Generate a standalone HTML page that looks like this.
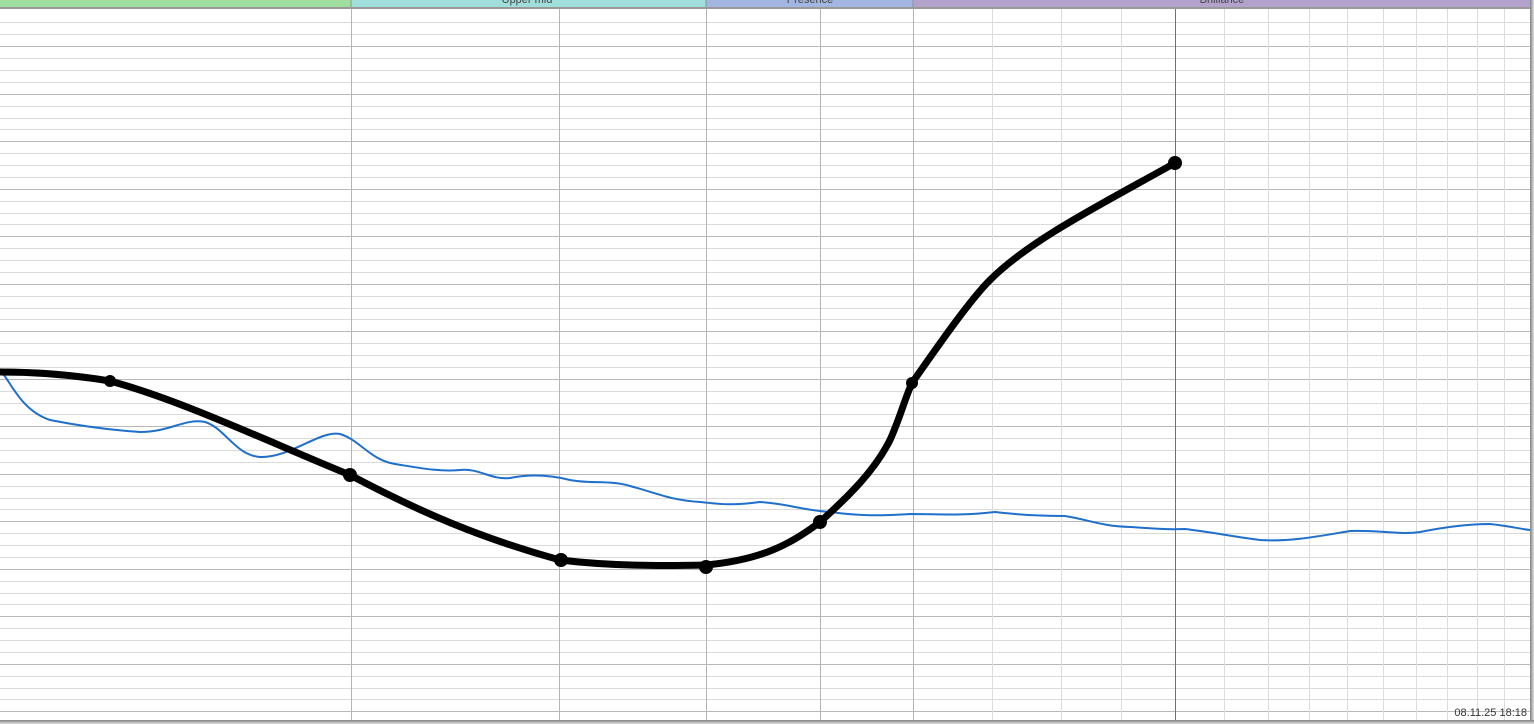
<!DOCTYPE html>
<html><head><style>
html,body{margin:0;padding:0;background:#fff;width:1534px;height:724px;overflow:hidden}
svg{display:block}
text{font-family:"Liberation Sans",sans-serif}
</style></head><body>
<svg width="1534" height="724" xmlns="http://www.w3.org/2000/svg">
<defs>
<linearGradient id="gb" x1="0" y1="0" x2="0" y2="1"><stop offset="0" stop-color="#808080"/><stop offset="1" stop-color="#e0e0e0"/></linearGradient>
<linearGradient id="gr" x1="0" y1="0" x2="1" y2="0"><stop offset="0" stop-color="#808080"/><stop offset="1" stop-color="#e0e0e0"/></linearGradient>
</defs>
<rect width="1534" height="724" fill="#fff"/>
<g stroke="#dadada" stroke-width="1">
<line x1="0" y1="22.5" x2="1530" y2="22.5"/><line x1="0" y1="34.5" x2="1530" y2="34.5"/>
<line x1="0" y1="58.5" x2="1530" y2="58.5"/><line x1="0" y1="70.5" x2="1530" y2="70.5"/><line x1="0" y1="82.5" x2="1530" y2="82.5"/>
<line x1="0" y1="106.5" x2="1530" y2="106.5"/><line x1="0" y1="118.5" x2="1530" y2="118.5"/><line x1="0" y1="129.5" x2="1530" y2="129.5"/>
<line x1="0" y1="153.5" x2="1530" y2="153.5"/><line x1="0" y1="165.5" x2="1530" y2="165.5"/><line x1="0" y1="177.5" x2="1530" y2="177.5"/>
<line x1="0" y1="201.5" x2="1530" y2="201.5"/><line x1="0" y1="213.5" x2="1530" y2="213.5"/><line x1="0" y1="224.5" x2="1530" y2="224.5"/>
<line x1="0" y1="248.5" x2="1530" y2="248.5"/><line x1="0" y1="260.5" x2="1530" y2="260.5"/><line x1="0" y1="272.5" x2="1530" y2="272.5"/>
<line x1="0" y1="296.5" x2="1530" y2="296.5"/><line x1="0" y1="308.5" x2="1530" y2="308.5"/><line x1="0" y1="319.5" x2="1530" y2="319.5"/>
<line x1="0" y1="343.5" x2="1530" y2="343.5"/><line x1="0" y1="355.5" x2="1530" y2="355.5"/><line x1="0" y1="367.5" x2="1530" y2="367.5"/>
<line x1="0" y1="391.5" x2="1530" y2="391.5"/><line x1="0" y1="403.5" x2="1530" y2="403.5"/><line x1="0" y1="414.5" x2="1530" y2="414.5"/>
<line x1="0" y1="438.5" x2="1530" y2="438.5"/><line x1="0" y1="450.5" x2="1530" y2="450.5"/><line x1="0" y1="462.5" x2="1530" y2="462.5"/>
<line x1="0" y1="486.5" x2="1530" y2="486.5"/><line x1="0" y1="498.5" x2="1530" y2="498.5"/><line x1="0" y1="509.5" x2="1530" y2="509.5"/>
<line x1="0" y1="533.5" x2="1530" y2="533.5"/><line x1="0" y1="545.5" x2="1530" y2="545.5"/><line x1="0" y1="557.5" x2="1530" y2="557.5"/>
<line x1="0" y1="581.5" x2="1530" y2="581.5"/><line x1="0" y1="593.5" x2="1530" y2="593.5"/><line x1="0" y1="604.5" x2="1530" y2="604.5"/>
<line x1="0" y1="628.5" x2="1530" y2="628.5"/><line x1="0" y1="640.5" x2="1530" y2="640.5"/><line x1="0" y1="652.5" x2="1530" y2="652.5"/>
<line x1="0" y1="676.5" x2="1530" y2="676.5"/><line x1="0" y1="688.5" x2="1530" y2="688.5"/><line x1="0" y1="699.5" x2="1530" y2="699.5"/>
</g>
<g stroke="#b8b8b8" stroke-width="1">
<line x1="0" y1="46.5" x2="1530" y2="46.5"/><line x1="0" y1="94.5" x2="1530" y2="94.5"/><line x1="0" y1="141.5" x2="1530" y2="141.5"/>
<line x1="0" y1="189.5" x2="1530" y2="189.5"/><line x1="0" y1="236.5" x2="1530" y2="236.5"/><line x1="0" y1="284.5" x2="1530" y2="284.5"/>
<line x1="0" y1="331.5" x2="1530" y2="331.5"/><line x1="0" y1="379.5" x2="1530" y2="379.5"/><line x1="0" y1="426.5" x2="1530" y2="426.5"/>
<line x1="0" y1="474.5" x2="1530" y2="474.5"/><line x1="0" y1="521.5" x2="1530" y2="521.5"/><line x1="0" y1="569.5" x2="1530" y2="569.5"/>
<line x1="0" y1="616.5" x2="1530" y2="616.5"/><line x1="0" y1="664.5" x2="1530" y2="664.5"/><line x1="0" y1="711.5" x2="1530" y2="711.5"/>
</g>
<g stroke="#dcdcdc">
<line x1="1224.5" y1="8" x2="1224.5" y2="720"/><line x1="1268.5" y1="8" x2="1268.5" y2="720"/><line x1="1309.5" y1="8" x2="1309.5" y2="720"/>
<line x1="1347.5" y1="8" x2="1347.5" y2="720"/><line x1="1383.5" y1="8" x2="1383.5" y2="720"/><line x1="1416.5" y1="8" x2="1416.5" y2="720"/>
<line x1="1447.5" y1="8" x2="1447.5" y2="720"/><line x1="1477.5" y1="8" x2="1477.5" y2="720"/><line x1="1504.5" y1="8" x2="1504.5" y2="720"/>
<line x1="992.5" y1="8" x2="992.5" y2="720"/><line x1="1061.5" y1="8" x2="1061.5" y2="720"/><line x1="1121.5" y1="8" x2="1121.5" y2="720"/>
</g>
<g stroke="#b4b4b4">
<line x1="351.5" y1="8" x2="351.5" y2="720"/><line x1="559.5" y1="8" x2="559.5" y2="720"/><line x1="706.5" y1="8" x2="706.5" y2="720"/>
<line x1="820.5" y1="8" x2="820.5" y2="720"/><line x1="913.5" y1="8" x2="913.5" y2="720"/>
</g>
<line x1="1175.5" y1="8" x2="1175.5" y2="720" stroke="#707070"/>
<rect x="0" y="0" width="351" height="7" fill="#a0dea0"/>
<rect x="351" y="0" width="355" height="7" fill="#a0dedb"/>
<rect x="706" y="0" width="207" height="7" fill="#a3b6e2"/>
<rect x="913" y="0" width="617" height="7" fill="#b3a2cb"/>
<g stroke="#888" stroke-width="0.8"><line x1="351" y1="0" x2="351" y2="7"/><line x1="706" y1="0" x2="706" y2="7"/><line x1="913" y1="0" x2="913" y2="7"/></g>
<rect x="0" y="7" width="1530" height="2" fill="#999"/>
<text x="527" y="3" font-size="11" fill="#444" text-anchor="middle">Upper mid</text>
<text x="810" y="3" font-size="11" fill="#444" text-anchor="middle">Presence</text>
<text x="1222" y="3" font-size="11" fill="#444" text-anchor="middle">Brilliance</text>
<rect x="1530" y="0" width="4" height="724" fill="url(#gr)"/>
<rect x="0" y="720" width="1534" height="4" fill="url(#gb)"/>
<path d="M0,370 C10,380 20,410 50,420 C80,426 110,430 140,432 C170,432 185,418 205,422 C225,428 235,455 260,457 C290,458 320,430 340,434 C360,440 370,460 395,464 C420,468 440,472 460,470 C480,468 490,480 510,478 C530,474 550,475 570,480 C590,484 610,480 630,486 C660,494 670,500 700,502 C720,504 730,506 760,502 C790,504 800,510 830,512 C860,516 880,516 910,514 C940,514 960,516 995,512 C1020,515 1040,516 1065,516 C1090,520 1100,526 1130,527 C1150,528 1160,530 1185,529 C1210,532 1230,536 1260,540 C1290,542 1320,536 1350,531 C1380,530 1400,535 1420,532 C1450,526 1470,524 1490,524 C1510,526 1520,529 1530,530" fill="none" stroke="#1f6fcc" stroke-width="2"/>
<path d="M0,372 C40,372 80,376 110,381 C180,400 260,438 350,475 C420,512 480,538 560,560 C610,566 660,566 706,565 C760,560 790,545 820,522 C850,495 875,470 890,440 C900,418 905,398 912,383 C940,343 970,300 990,280 C1030,240 1100,205 1175,163" fill="none" stroke="#000" stroke-width="7"/>
<g fill="#000">
<circle cx="110" cy="381" r="6"/><circle cx="350" cy="475" r="7"/><circle cx="561" cy="560" r="7"/>
<circle cx="706" cy="567" r="7"/><circle cx="820" cy="522" r="7"/><circle cx="912" cy="383" r="6"/><circle cx="1175" cy="163" r="7"/>
</g>
<text x="1527" y="716" font-size="11" fill="#333" text-anchor="end">08.11.25 18:18</text>
</svg>
</body></html>
